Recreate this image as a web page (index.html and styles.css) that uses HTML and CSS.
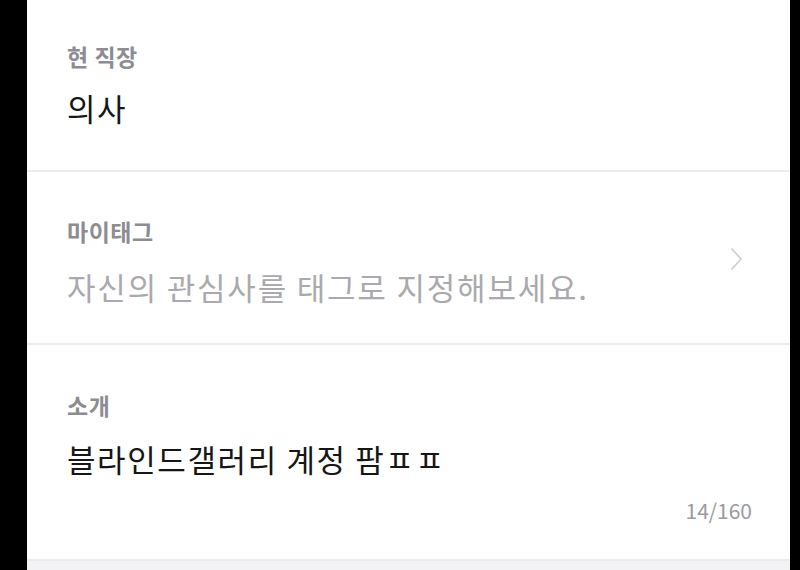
FILE: index.html
```html
<!DOCTYPE html>
<html>
<head>
    <title>프로필 편집</title>
    <meta charset="utf-8" />
    <link rel="stylesheet" href="styles.css">
</head>
<body>
    <div id="screen">
        <div class="field field-job">
            <div class="field-label">현 직장</div>
            <div class="field-value">의사</div>
        </div>

        <div class="field field-tag">
            <div class="field-body">
                <div class="field-label">마이태그</div>
                <div class="field-value placeholder">자신의 관심사를 태그로 지정해보세요.</div>
            </div>
            <svg class="chevron" width="14" height="24" viewBox="0 0 14 24">
                <path d="M2 2 L11 12 L2 22" fill="none" stroke="#cfcfd3" stroke-width="1.8" stroke-linecap="round" stroke-linejoin="round" />
            </svg>
        </div>

        <div class="field field-intro">
            <div class="field-label">소개</div>
            <div class="field-value">블라인드갤러리 계정 팜ㅍㅍ</div>
            <div class="counter">14/160</div>
        </div>
    </div>
</body>
</html>
```

FILE: styles.css
```css
html, body {
    margin: 0;
    padding: 0;
    background: black;
}
#screen {
    width: 763px;
    height: 570px;
    margin-left: 27px;
    background: #f3f3f6;
    overflow: hidden;
    font-family: "Noto Sans CJK KR", "Noto Sans", sans-serif;
}
.field {
    background: white;
    padding-left: 40px;
    border-bottom: 2px solid #ececef;
}
.field-job {
    padding-top: 44px;
    padding-bottom: 42px;
}
.field-tag {
    display: flex;
    align-items: center;
    padding-top: 47px;
    padding-bottom: 36px;
    padding-right: 46px;
}
.field-intro {
    padding-top: 48px;
    padding-bottom: 37px;
    padding-right: 38px;
}
.field-body {
    flex: 1;
}
.field-label {
    font-size: 23px;
    line-height: 24px;
    font-weight: 700;
    letter-spacing: 0.5px;
    color: #8c8c92;
}
.field-job .field-label {
    margin-bottom: 20px;
}
.field-tag .field-label {
    margin-bottom: 24px;
}
.field-intro .field-label {
    margin-bottom: 22px;
}
.field-value {
    font-size: 31px;
    line-height: 40px;
    letter-spacing: 1.6px;
    color: #161616;
}
.placeholder {
    color: #a9a9ae;
    letter-spacing: 1.8px;
}
.chevron {
    margin-bottom: 8px;
}
.counter {
    margin-top: 19px;
    text-align: right;
    font-size: 21px;
    line-height: 24px;
    color: #9a9a9f;
}
```
